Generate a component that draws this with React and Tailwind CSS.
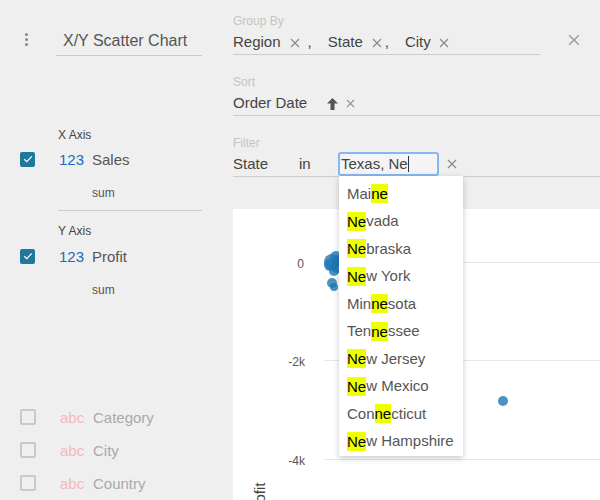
import React from "react";

const XIcon = ({ size = 10, color = "#8a8a8a", sw = 1.2 }) => (
  <svg width={size} height={size} viewBox="0 0 10 10" className="block shrink-0">
    <path d="M1 1L9 9M9 1L1 9" stroke={color} strokeWidth={sw} fill="none" />
  </svg>
);

const Checked = () => (
  <div className="w-[15px] h-[15px] rounded-[2px] bg-[#22789b] flex items-center justify-center shrink-0">
    <svg width="10" height="8" viewBox="0 0 10 8" className="block">
      <path d="M1.2 4.2L3.8 6.6L8.8 1.4" stroke="white" strokeWidth="1.2" fill="none" />
    </svg>
  </div>
);

const Unchecked = () => (
  <div className="w-[16px] h-[16px] rounded-[2px] border-2 border-[#c9c9c9] shrink-0" />
);

const FieldRow = ({ checked, type, name, className = "" }) => (
  <div className={"h-[24px] flex items-center pl-[20px] " + className}>
    {checked ? <Checked /> : <Unchecked />}
    <span
      className={
        "ml-[24px] w-[33px] pt-[3px] text-[15px] " +
        (type === "123" ? "text-[#1b6bc2]" : "text-[#f5b8b8]")
      }
    >
      {type}
    </span>
    <span className={"pt-[3px] text-[15px] " + (checked ? "text-[#555]" : "text-[#aaaaaa]")}>{name}</span>
  </div>
);

const states = [
  ["Mai", "ne", ""],
  ["", "Ne", "vada"],
  ["", "Ne", "braska"],
  ["", "Ne", "w York"],
  ["Min", "ne", "sota"],
  ["Ten", "ne", "ssee"],
  ["", "Ne", "w Jersey"],
  ["", "Ne", "w Mexico"],
  ["Con", "ne", "cticut"],
  ["", "Ne", "w Hampshire"],
];

export default function App() {
  return (
    <div className="w-[600px] h-[500px] bg-[#efefef] flex overflow-hidden font-['Liberation_Sans',Arial,sans-serif]">
      {/* Left column */}
      <div className="w-[233px] shrink-0 flex flex-col">
        <div className="flex pt-[28px]">
          <div className="w-[56px] pl-[25px] pt-[5px] flex flex-col gap-[2px]">
            <div className="w-[3px] h-[3px] rounded-full bg-[#888]" />
            <div className="w-[3px] h-[3px] rounded-full bg-[#888]" />
            <div className="w-[3px] h-[3px] rounded-full bg-[#888]" />
          </div>
          <div className="w-[146px] h-[28px] border-b border-[#c8c8c8] pl-[7px] pt-[1px] text-[16px] leading-[24px] text-[#555]">
            X/Y Scatter Chart
          </div>
        </div>

        <div className="mt-[71px] pl-[58px] text-[12px] leading-[16px] text-[#444]">X Axis</div>
        <FieldRow checked type="123" name="Sales" className="mt-[4px]" />
        <div className="mt-[14px] pl-[92px] text-[12px] leading-[16px] text-[#555]">sum</div>
        <div className="mt-[9px] ml-[58px] w-[144px] h-px bg-[#cccccc]" />
        <div className="mt-[12px] pl-[58px] text-[12px] leading-[16px] text-[#444]">Y Axis</div>
        <FieldRow checked type="123" name="Profit" className="mt-[5px]" />
        <div className="mt-[14px] pl-[92px] text-[12px] leading-[16px] text-[#555]">sum</div>

        <FieldRow type="abc" name="Category" className="mt-[107px]" />
        <FieldRow type="abc" name="City" className="mt-[9px]" />
        <FieldRow type="abc" name="Country" className="mt-[9px]" />
      </div>

      {/* Right column */}
      <div className="flex-1 min-w-0 flex flex-col">
        {/* Group By */}
        <div className="flex">
          <div className="w-[307px] border-b border-[#cccccc] pt-[13px]">
            <div className="pt-[1px] text-[12px] leading-[15px] text-[#c4c4c4]">Group By</div>
            <div className="h-[25px] pt-[2px] flex items-center text-[15px] text-[#444]">
              <span>Region</span>
              <span className="ml-[9px]"><XIcon /></span>
              <span className="ml-[8px]">,</span>
              <span className="ml-[16px]">State</span>
              <span className="ml-[9px]"><XIcon /></span>
              <span className="ml-[3px]">,</span>
              <span className="ml-[16px]">City</span>
              <span className="ml-[8px]"><XIcon /></span>
            </div>
          </div>
          <div className="ml-[28px] mt-[34px]">
            <XIcon size={12} color="#999" sw={1.1} />
          </div>
        </div>

        {/* Sort */}
        <div className="border-b border-[#cccccc] pt-[19px]">
          <div className="pt-[1px] text-[12px] leading-[15px] text-[#c4c4c4]">Sort</div>
          <div className="h-[25px] pt-[2px] flex items-center text-[15px] text-[#444]">
            <span>Order Date</span>
            <svg width="11" height="12" viewBox="0 0 11 12" className="block ml-[20px]">
              <path d="M5.5 0L11 5.5H7.5V12H3.5V5.5H0Z" fill="#555" />
            </svg>
            <span className="ml-[8px]"><XIcon size={9} /></span>
          </div>
        </div>

        {/* Filter */}
        <div className="relative border-b border-[#cccccc] pt-[19px]">
          <div className="pt-[1px] text-[12px] leading-[15px] text-[#c4c4c4]">Filter</div>
          <div className="h-[25px] flex items-center text-[15px] text-[#444]">
            <span className="w-[66px] pt-[2px]">State</span>
            <span className="w-[39px] pt-[2px]">in</span>
            <div className="w-[101px] h-[24px] border-2 border-[#86b6f4] rounded-[3px] bg-[#f4f4f4] flex items-center pl-[1px] pt-[1px] text-[#444]">
              <span>Texas, Ne</span>
              <span className="w-px h-[16px] bg-[#333]" />
            </div>
            <span className="ml-[8px]"><XIcon size={10} /></span>
          </div>

          {/* Dropdown */}
          <div className="absolute left-[106px] top-full w-[124px] bg-white pt-[4px] pb-[1px] shadow-[0_2px_6px_rgba(0,0,0,0.22)] z-10">
            {states.map(([a, h, b], i) => (
              <div key={i} className="h-[27.5px] flex items-center pl-[8px] text-[15px] text-[#555]">
                <span>{a}</span>
                <span className="bg-[#eeff00] text-black leading-[19px]">{h}</span>
                <span>{b}</span>
              </div>
            ))}
          </div>
        </div>

        {/* Chart */}
        <div className="mt-[32px] flex-1 bg-white overflow-hidden">
          <svg width="367" height="291" className="block">
            <g stroke="#e6e6e6" strokeWidth="1">
              <line x1="91" y1="53.5" x2="367" y2="53.5" />
              <line x1="91" y1="151.5" x2="367" y2="151.5" />
              <line x1="91" y1="250.5" x2="367" y2="250.5" />
            </g>
            <g fontSize="12" fill="#555" textAnchor="end" fontFamily="'Liberation Sans', Arial, sans-serif">
              <text x="71" y="59">0</text>
              <text x="72" y="157">-2k</text>
              <text x="72" y="256">-4k</text>
            </g>
            <text
              transform="rotate(-90)"
              x="-291"
              y="32"
              textAnchor="middle"
              fontSize="15"
              fill="#444"
              fontFamily="'Liberation Sans', Arial, sans-serif"
            >
              Profit
            </text>
            <g fill="#1f77b4" fillOpacity="0.8">
              <circle cx="99" cy="53" r="8" />
              <circle cx="103" cy="48" r="6" />
              <circle cx="104" cy="58" r="6" />
              <circle cx="97" cy="56" r="6" />
              <circle cx="101" cy="62" r="5" />
              <circle cx="106" cy="52" r="6" />
              <circle cx="99" cy="74" r="5" />
              <circle cx="101" cy="78" r="4" />
              <circle cx="270" cy="192" r="5" />
            </g>
          </svg>
        </div>
      </div>
    </div>
  );
}
